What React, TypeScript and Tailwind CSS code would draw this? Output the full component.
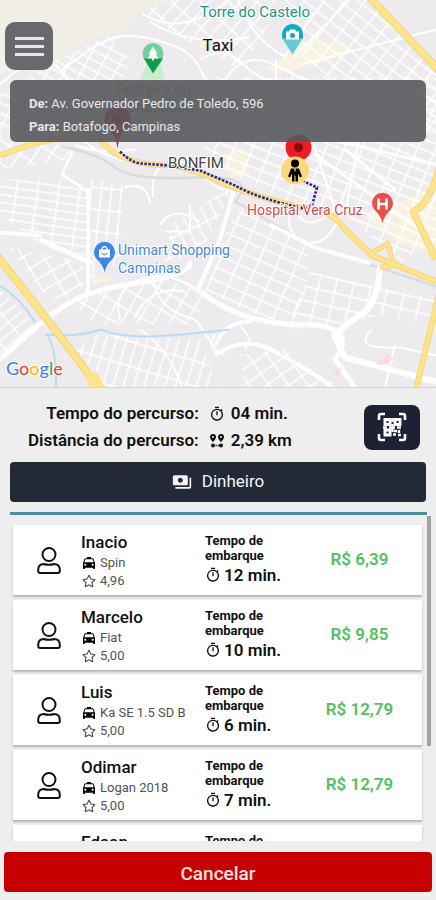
import React, { useState } from "react";
import { FaRegStar } from "react-icons/fa";
import { MdLocalTaxi, MdOutlineTimer, MdPayments } from "react-icons/md";

type Driver = {
  name: string;
  car: string;
  rating: string;
  wait: string;
  price: string;
};

const drivers: Driver[] = [
  { name: "Inacio", car: "Spin", rating: "4,96", wait: "12 min.", price: "R$ 6,39" },
  { name: "Marcelo", car: "Fiat", rating: "5,00", wait: "10 min.", price: "R$ 9,85" },
  { name: "Luis", car: "Ka SE 1.5 SD B", rating: "5,00", wait: "6 min.", price: "R$ 12,79" },
  { name: "Odimar", car: "Logan 2018", rating: "5,00", wait: "7 min.", price: "R$ 12,79" },
  { name: "Edson", car: "Onix", rating: "5,00", wait: "8 min.", price: "R$ 12,79" },
];

// Street grids: one rotated pattern for each neighbourhood
const grids = [
  { id: "g1", w: 15, h: 9, angle: 28, area: "55,62 110,36 130,60 125,80 0,135 0,95" },
  { id: "g2", w: 12, h: 19, angle: 42, area: "142,12 175,0 280,0 262,40 240,70 200,50" },
  { id: "g3", w: 16, h: 11, angle: 38, area: "285,0 372,0 436,75 436,135 330,78 300,55" },
  { id: "g4", w: 17, h: 10, angle: 22, area: "205,78 436,78 436,240 400,262 345,215 290,205 205,160" },
  { id: "g5", w: 21, h: 8, angle: 8, area: "0,180 72,180 88,190 88,262 40,245 0,215" },
  { id: "g6", w: 10, h: 22, angle: 6, area: "90,180 124,186 120,262 90,280" },
  { id: "g7", w: 18, h: 12, angle: 24, area: "240,205 310,245 305,300 285,328 205,292 222,245" },
  { id: "g8", w: 17, h: 14, angle: 13, area: "310,272 436,300 430,325 380,315 350,325 285,330" },
  { id: "g9", w: 9, h: 20, angle: 50, area: "0,288 38,332 0,362" },
  { id: "g10", w: 10, h: 24, angle: 17, area: "95,335 200,340 218,388 105,388 75,350" },
  { id: "g11", w: 13, h: 16, angle: 55, area: "240,355 285,350 335,388 245,388" },
  { id: "g12", w: 14, h: 17, angle: 30, area: "70,305 150,275 205,292 198,325 95,325" },
  { id: "g13", w: 13, h: 19, angle: 35, area: "0,135 70,145 70,160 0,170" },
  { id: "g14", w: 17, h: 10, angle: 64, area: "172,225 235,185 200,255 165,262" },
  { id: "g15", w: 13, h: 18, angle: 60, area: "8,248 84,262 84,288 60,304 40,290" },
];

const minorRoads = [
  "M0 85C25 62 45 52 62 72S70 115 60 140",
  "M60 72C90 50 110 30 145 38S195 52 205 80",
  "M142 14C180 38 210 12 226 4M150 22Q190 48 250 38",
  "M200 60Q225 45 245 66T290 80M225 80Q245 50 276 66T310 80",
  "M276 60V80M284 58L315 12M294 58L350 0M300 65L436 30M286 58Q250 38 238 0",
  "M75 145Q95 155 135 150M85 142Q110 165 175 168",
  "M125 188C140 182 150 192 150 205M153 198Q150 165 170 164T205 178 228 190",
  "M160 225Q172 205 200 222M165 232H190V205",
  "M120 320Q112 290 140 280T200 292M135 318Q150 285 185 292",
  "M152 275Q155 310 195 320L215 348M140 330Q170 350 182 388",
  "M290 212Q285 235 305 242T340 218M296 212Q305 232 330 215",
  "M372 330Q350 350 400 348L436 356M395 345L385 388",
  "M215 335Q205 350 225 355M240 325L250 340 245 350",
];

const mainRoads = [
  { d: "M88 190V292M0 233L40 236", w: 4 },
  { d: "M42 241L90 263", w: 5 },
  { d: "M0 360Q45 318 68 304T140 283 190 264", w: 5 },
  { d: "M72 153L62 175 88 192", w: 3 },
  { d: "M234 190L220 240 198 290", w: 4 },
  { d: "M198 290Q240 325 300 325T335 360L355 388", w: 5 },
  { d: "M380 268Q378 300 365 312Q345 326 334 336L345 358 436 382", w: 6 },
  { d: "M216 345Q225 322 250 322M216 355Q245 335 275 352T330 385", w: 4 },
  { d: "M330 140L436 165M345 150L395 190M315 155L420 230", w: 3 },
  { d: "M292 78L335 210M370 80L345 215", w: 2 },
];

const highways = [
  { d: "M-4 255L55 330Q80 362 102 394", w: 8 },
  { d: "M0 156Q60 132 90 140M100 140Q120 166 170 166 185 166 215 180T300 208Q330 208 345 230L372 256 436 282", w: 6 },
  { d: "M366 -6Q395 25 440 72", w: 8 },
  { d: "M440 165Q430 205 413 212L436 260", w: 7 },
  { d: "M440 290L416 390", w: 6 },
  { d: "M368 256L388 244 394 266 380 268", w: 5 },
];

const StreetMap: React.FC = () => (
  <svg
    viewBox="0 0 436 388"
    preserveAspectRatio="xMidYMid slice"
    className="absolute inset-0 h-full w-full"
    fontFamily="Roboto, sans-serif"
    role="img"
    aria-label="Mapa"
  >
    <defs>
      {grids.map((g) => (
        <pattern
          key={g.id}
          id={g.id}
          width={g.w}
          height={g.h}
          patternUnits="userSpaceOnUse"
          patternTransform={`rotate(${g.angle})`}
        >
          <path d={`M0 0H${g.w}M0 0V${g.h}`} stroke="#fff" strokeWidth="3" />
        </pattern>
      ))}
    </defs>
    <rect width="436" height="388" fill="#eeebee" />
    <path d="M0 0H175L140 13Q125 35 105 36 80 40 62 60L0 75Z" fill="#f1efe6" />
    <path d="M148 62H160L165 80H140Z" fill="#c9eccd" />
    <path d="M258 70L280 62 300 42H345V55L290 72ZM225 155L245 150 250 175 230 178ZM362 215L436 190V255L400 245ZM92 275L115 280 92 285Z" fill="#f7f3e0" />
    {grids.map((g) => (
      <polygon key={g.id} points={g.area} fill={`url(#${g.id})`} />
    ))}
    <g fill="none" stroke="#fff" strokeWidth="2">
      {minorRoads.map((d) => (
        <path key={d} d={d} />
      ))}
    </g>
    <path d="M62 147Q100 155 115 168T195 178 235 202L310 245 436 287" fill="none" stroke="#d9dbdf" strokeWidth="2.5" />
    <path d="M270 225L315 248 370 264" fill="none" stroke="#fff" strokeWidth="4" />
    <g fill="none" stroke="#fff" strokeLinecap="round" strokeLinejoin="round">
      {mainRoads.map((r) => (
        <path key={r.d} d={r.d} strokeWidth={r.w} />
      ))}
    </g>
    <path d="M0 286Q22 300 35 323M45 335Q80 338 100 330 120 337 145 337T230 330M47 335Q57 350 56 388" fill="none" stroke="#b8dcf4" strokeWidth="2" />
    <path d="M375 364L388 355 394 360 380 366ZM332 375L342 366 338 378Z" fill="#f9dfd8" />
    <g fill="none" strokeLinejoin="round">
      {highways.map((r) => (
        <path key={r.d} d={r.d} stroke="#f3d581" strokeWidth={r.w} />
      ))}
      {highways.map((r) => (
        <path key={r.d} d={r.d} stroke="#fde38a" strokeWidth={r.w - 2} />
      ))}
    </g>
    <path d="M84 375L96 372 106 388H90Z" fill="#fde38a" />

    {/* Route */}
    <path d="M120 152Q132 164 142 164L168 166 200 171 235 186Q260 200 305 209L312 206 317 188 304 182" fill="none" stroke="#2424a8" strokeWidth="2.6" strokeDasharray="2.5 1.5" />

    {/* Places */}
    <g stroke="#fff" strokeWidth="2" paintOrder="stroke" fontSize="14">
      <text x="200" y="17" fontSize="15" fill="#1d9485">Torre do Castelo</text>
      <g fill="#4da571" fontSize="15">
        <text x="115" y="94">Pedreira do</text>
        <text x="126" y="112">Chapadão</text>
      </g>
      <g fill="#4789d3">
        <text x="118" y="255">Unimart Shopping</text>
        <text x="118" y="273">Campinas</text>
      </g>
      <text x="247" y="215" fill="#cf4b52">Hospital Vera Cruz</text>
      <text x="168" y="168" fontSize="15" fill="#444">BONFIM</text>
    </g>

    <circle cx="153" cy="54" r="10.5" fill="#74cf9b" />
    <path d="M144 59H163L153 74Z" fill="#129b48" />
    <path d="M153 47L148.500 54H150.500L147.500 59H152V61H154V59H158.500L155.500 54H157.500Z" fill="#fff" />

    <path d="M292.500 55L283 40A10.500 10.500 0 1 1 302 40Z" fill="#66cad5" />
    <path d="M282 35A10.500 10.500 0 0 1 303 35V39H282Z" fill="#15aabf" />
    <path d="M286 32H289L290 30H295L296 32H299V40H286Z" fill="#fff" />
    <circle cx="292.500" cy="36" r="2.500" fill="#15aabf" />

    <path d="M104.500 273Q103 265 97 260A10.500 10.500 0 1 1 112 260Q106 265 104.500 273Z" fill="#4285e8" />
    <path d="M99 250H110V258H99Z" fill="#fff" />
    <path d="M102 251V249Q104.500 245 107 249V251" fill="none" stroke="#fff" strokeWidth="1.300" />
    <path d="M102 253.500Q104.500 257 107 253.500" fill="none" stroke="#4285e8" strokeWidth="1.200" />

    <path d="M382.500 224Q381 216 375 211A10.500 10.500 0 1 1 390 211Q384 216 382.500 224Z" fill="#e85147" />
    <path d="M378.500 199V210M386.500 199V210M378.500 204.500H386.500" stroke="#fff" strokeWidth="2.500" />

    {/* Destination and pickup markers */}
    <path d="M117.500 149L116 140Q113 132 107 127A13 13 0 1 1 128 127Q122 132 119 140Z" fill="#de1520" />
    <circle cx="117.500" cy="119" r="4.500" fill="#7c0d10" />
    <circle cx="298.500" cy="148" r="13" fill="#eb1d24" />
    <circle cx="298.500" cy="148" r="4.500" fill="#8d0b10" />
    <circle cx="295" cy="171" r="14" fill="#fbd97c" />
    <circle cx="295" cy="164" r="4" fill="#000" />
    <path d="M291 169H299L302 177 300 178 298 174V182H295.500V176H294.500V182H292V174L290 178 288 177Z" fill="#000" />
    <path d="M294 169H296L295 173Z" fill="#fbd97c" />

    <text x="6" y="375" fontSize="18" fontFamily="Lato, sans-serif" fontWeight="500" stroke="#fff" strokeWidth="2" paintOrder="stroke">
      <tspan fill="#4285f4">G</tspan>
      <tspan fill="#ea4335">o</tspan>
      <tspan fill="#fbbc05">o</tspan>
      <tspan fill="#4285f4">g</tspan>
      <tspan fill="#34a853">l</tspan>
      <tspan fill="#ea4335">e</tspan>
    </text>
  </svg>
);

const UserIcon: React.FC = () => (
  <svg viewBox="0 0 24 27" className="ml-6 h-[27px] w-6" fill="none" stroke="currentColor" strokeWidth="2">
    <circle cx="12" cy="7.500" r="6.500" />
    <path d="M1.200 24V23Q1.200 17 7 17 9 17.800 12 17.800T17 17Q22.800 17 22.800 23V24Q22.800 26 20.800 26H3.200Q1.200 26 1.200 24Z" />
  </svg>
);

const DistanceIcon: React.FC = () => (
  <svg viewBox="0 0 16 16" className="h-4 w-4" fill="currentColor">
    <path fillRule="evenodd" d="M4 1a3 3 0 0 1 3 3c0 2-3 5-3 5S1 6 1 4a3 3 0 0 1 3-3Zm0 2a1 1 0 1 0 0 2 1 1 0 0 0 0-2ZM12 1a3 3 0 0 1 3 3c0 2-3 5-3 5S9 6 9 4a3 3 0 0 1 3-3Zm0 2a1 1 0 1 0 0 2 1 1 0 0 0 0-2Z" />
    <circle cx="4" cy="12.500" r="2" />
    <circle cx="12" cy="12.500" r="2" />
    <path d="M6.500 11.700h1.300v1.500H6.500zM8.700 11.700H10v1.500H8.700z" />
  </svg>
);

const QrScanIcon: React.FC = () => (
  <svg viewBox="0 0 30 30" className="h-[30px] w-[30px]" fill="none" stroke="#fff">
    <path d="M2 8V4Q2 2 4 2H8M22 2H26Q28 2 28 4V8M28 22V26Q28 28 26 28H22M8 28H4Q2 28 2 26V22" strokeWidth="2.600" />
    <path d="M8 7.500H13V12.500H8ZM18 7.500H23V12.500H18ZM8 18H13V23H8Z" strokeWidth="3" />
    <path d="M15.500 6V10M6 15.500H10M12 15.500H18M20 15.500H24M15.500 12V20M17 19H20M22 18V21M16 22.500H19M21 23H24" strokeWidth="2.400" />
  </svg>
);

const DriverCard: React.FC<{ driver: Driver }> = ({ driver }) => (
  <button
    type="button"
    className="grid w-full shrink-0 grid-cols-[68px_1fr_92px_125px] items-center bg-white py-[5px] text-left shadow-[0px_2px_2px_rgba(0,0,0,0.25)]"
  >
    <UserIcon />
    <span className="block">
      <span className="block text-[17px] leading-6 font-medium">{driver.name}</span>
      <span className="flex items-center gap-[3px] text-[13px] leading-[18px] text-neutral-600">
        <MdLocalTaxi className="h-4 w-4 text-black" />
        {driver.car}
      </span>
      <span className="flex items-center gap-[3px] text-[13px] leading-[18px] text-neutral-600">
        <FaRegStar className="mx-px h-[14px] w-[14px]" />
        {driver.rating}
      </span>
    </span>
    <span className="block">
      <span className="block text-[13px] leading-[15px] font-bold">
        Tempo de
        <br />
        embarque
      </span>
      <span className="flex items-center gap-[3px] text-[17px] leading-6 font-semibold whitespace-nowrap">
        <MdOutlineTimer className="h-4 w-4" />
        {driver.wait}
      </span>
    </span>
    <span className="block text-center text-[17px] font-semibold text-[#52c062]">{driver.price}</span>
  </button>
);

const App: React.FC = () => {
  const [menuOpen, setMenuOpen] = useState(false);

  return (
    <main className="flex h-screen flex-col bg-[#eeeeee] font-[Roboto,sans-serif] text-[#111]">
      {/* Map */}
      <section className="relative h-[43%] shrink-0 overflow-hidden">
        <StreetMap />
        <div className="relative">
          <header className="grid grid-cols-[48px_1fr_48px] items-center px-[5px] pt-[22px]">
            <button
              type="button"
              aria-label="Menu"
              aria-expanded={menuOpen}
              onClick={() => setMenuOpen(!menuOpen)}
              className="flex h-12 flex-col items-center justify-center gap-[5px] rounded-[10px] bg-[#67696c]"
            >
              <span className="h-[3px] w-[29px] bg-gray-200" />
              <span className="h-[3px] w-[29px] bg-gray-200" />
              <span className="h-[3px] w-[29px] bg-gray-200" />
            </button>
            <h1 className="text-center text-[17px] text-[#111]">Taxi</h1>
          </header>
          <div className="mx-[10px] mt-[10px] rounded-md bg-[#58595c]/90 px-[19px] pt-3 pb-1 text-[13px] leading-[23px] text-gray-200">
            <p>
              <strong>De:</strong> Av. Governador Pedro de Toledo, 596
            </p>
            <p>
              <strong>Para:</strong> Botafogo, Campinas
            </p>
          </div>
        </div>
      </section>

      {/* Trip summary */}
      <section className="flex items-center justify-between border-t border-gray-300 pt-3 pr-4 pl-7">
        <dl className="grid grid-cols-[auto_auto] gap-x-[10px] text-[17px] leading-[27px] font-semibold">
          <dt className="text-right">Tempo do percurso:</dt>
          <dd className="flex items-center gap-[6px]">
            <MdOutlineTimer className="h-4 w-4" />
            04 min.
          </dd>
          <dt className="text-right">Distância do percurso:</dt>
          <dd className="flex items-center gap-[6px]">
            <DistanceIcon />
            2,39 km
          </dd>
        </dl>
        <button
          type="button"
          aria-label="QR Code"
          className="flex h-[45px] w-14 items-center justify-center rounded-lg bg-[#1c2233]"
        >
          <QrScanIcon />
        </button>
      </section>

      <button
        type="button"
        className="mx-[10px] mt-2 flex h-10 shrink-0 items-center justify-center gap-[10px] rounded bg-[#242938] text-[17px] text-gray-100"
      >
        <MdPayments className="h-5 w-5" />
        Dinheiro
      </button>

      {/* Drivers */}
      <section className="mt-[10px] flex min-h-0 flex-1 pr-[5px] pl-[10px]">
        <div className="flex min-w-0 flex-1 flex-col border-t-[3px] border-[#4b8f98]">
          <div className="flex flex-1 flex-col gap-[5px] overflow-y-auto pt-[10px] pr-[5px] pl-[3px] [scrollbar-width:none]">
            {drivers.map((driver) => (
              <DriverCard key={driver.name} driver={driver} />
            ))}
          </div>
        </div>
        <div className="mt-1 h-[70%] w-1 bg-neutral-400" />
      </section>

      <button
        type="button"
        className="mx-1 mt-[11px] mb-2 h-10 shrink-0 rounded bg-[#c60000] pt-1 text-[19px] font-medium text-red-100"
      >
        Cancelar
      </button>
    </main>
  );
};

export default App;
